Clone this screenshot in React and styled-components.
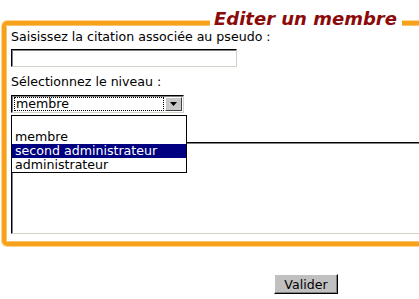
import React from "react";
import styled, { createGlobalStyle } from "styled-components";

const GlobalStyle = createGlobalStyle`
  html, body {
    margin: 0;
    padding: 0;
    background: #ffffff;
    overflow: hidden;
  }
  body {
    font-family: "DejaVu Sans", Verdana, sans-serif;
    font-size: 12.6px;
    color: #000000;
  }
`;

const Page = styled.div`
  width: 419px;
  height: 299px;
  padding: 21px 0 0 2px;
  box-sizing: border-box;
  overflow: hidden;
`;

const Frame = styled.div`
  position: relative;
  width: 460px;
  border: 4px solid #f8a11b;
  border-radius: 5px;
  box-shadow: 0 0 0 1px #fdd79a, inset 0 0 0 1px #fbc46a;
  padding: 4px 0 8px 5px;
`;

const Legend = styled.div`
  position: absolute;
  top: -17px;
  left: 204px;
  padding: 0 5px 0 4px;
  background: #ffffff;
  color: #8b0a0a;
  font-family: "DejaVu Sans", Verdana, sans-serif;
  font-size: 18px;
  font-weight: bold;
  font-style: italic;
  line-height: 22px;
  white-space: nowrap;
`;

const Label = styled.div`
  line-height: 15px;
  white-space: nowrap;
`;

const TextInput = styled.div`
  width: 224px;
  height: 16px;
  margin: 5px 0 7px;
  border: 1px solid;
  border-color: #000000 #d4d0c8 #d4d0c8 #000000;
  box-shadow: inset 1px 1px 0 #808080;
  background: #ffffff;
`;

const SelectWrap = styled.div`
  position: relative;
  width: 173px;
  margin-top: 6px;
`;

const SelectBox = styled.div`
  display: flex;
  border: 1px solid;
  border-color: #000000 #d4d0c8 #d4d0c8 #000000;
  box-shadow: inset 1px 1px 0 #808080;
  background: #ffffff;
  padding: 1px 1px 1px 2px;
  height: 14px;
`;

const SelectValue = styled.div`
  flex: 1;
  border: 1px dotted #000000;
  padding-left: 1px;
  line-height: 12px;
`;

const ArrowButton = styled.div`
  width: 15px;
  margin-left: 1px;
  background: #c8c8c8;
  border: 1px solid;
  border-color: #ffffff #404040 #404040 #ffffff;
  display: flex;
  align-items: center;
  justify-content: center;
`;

const Popup = styled.div`
  position: absolute;
  top: 20px;
  left: 0;
  width: 174px;
  border: 1px solid #000000;
  background: #ffffff;
  z-index: 2;
`;

const Option = styled.div`
  height: 14px;
  line-height: 14px;
  padding-left: 3px;
  white-space: nowrap;
  background: ${(p) => (p.$active ? "#000080" : "#ffffff")};
  color: ${(p) => (p.$active ? "#ffffff" : "#000000")};
`;

const TextArea = styled.div`
  width: 440px;
  height: 90px;
  margin-top: 29px;
  border: 1px solid;
  border-color: #000000 #d4d0c8 #d4d0c8 #000000;
  box-shadow: inset 1px 1px 0 #808080;
  background: #ffffff;
`;

const ButtonRow = styled.div`
  display: flex;
  padding: 28px 0 0 272px;
`;

const Button = styled.button`
  width: 64px;
  height: 20px;
  padding: 0;
  background: #c0c0c0;
  border: 1px solid;
  border-color: #ffffff #000000 #000000 #ffffff;
  box-shadow: inset -1px -1px 0 #808080;
  font-family: "DejaVu Sans", Verdana, sans-serif;
  font-size: 12.6px;
  color: #000000;
`;

const options = [
  { label: "", active: false },
  { label: "membre", active: false },
  { label: "second administrateur", active: true },
  { label: "administrateur", active: false },
];

export default function App() {
  return (
    <>
      <GlobalStyle />
      <Page>
        <Frame>
          <Legend>Editer un membre</Legend>
          <Label>Saisissez la citation associée au pseudo :</Label>
          <TextInput />
          <Label>Sélectionnez le niveau :</Label>
          <SelectWrap>
            <SelectBox>
              <SelectValue>membre</SelectValue>
              <ArrowButton>
                <svg width="7" height="4" viewBox="0 0 7 4">
                  <path d="M0 0h7L3.5 4z" fill="#000" />
                </svg>
              </ArrowButton>
            </SelectBox>
            <Popup>
              {options.map((o, i) => (
                <Option key={i} $active={o.active}>
                  {o.label}
                </Option>
              ))}
            </Popup>
          </SelectWrap>
          <TextArea />
        </Frame>
        <ButtonRow>
          <Button>Valider</Button>
        </ButtonRow>
      </Page>
    </>
  );
}
